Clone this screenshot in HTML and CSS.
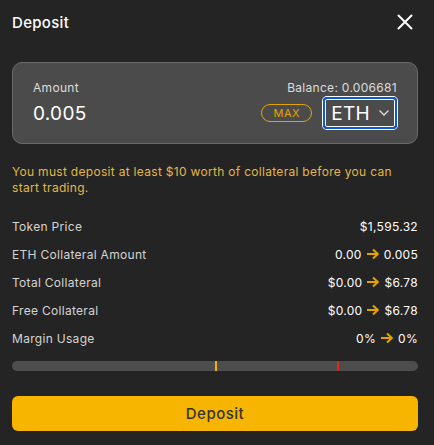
FILE: index.html
```html
<!DOCTYPE html>
<html lang="en">
<head>
    <meta charset="UTF-8">
    <meta name="viewport" content="width=device-width, initial-scale=1.0">
    <title>Deposit</title>

    <link rel="stylesheet" href="styles.css">
</head>
<body>
    <main class="modal">
        <header class="modal-header">
            <h2>Deposit</h2>
            <button class="close-btn" aria-label="Close">
                <svg width="16" height="16" viewBox="0 0 16 16">
                    <path d="M1.5 1.5 L14.5 14.5 M14.5 1.5 L1.5 14.5" stroke="#fff" stroke-width="2" stroke-linecap="round"/>
                </svg>
            </button>
        </header>

        <section class="amount-box">
            <div class="amount-top">
                <span class="label">Amount</span>
                <span class="balance">Balance: 0.006681</span>
            </div>
            <div class="amount-bottom">
                <input class="amount-input" type="text" value="0.005">
                <button class="max-btn">MAX</button>
                <div class="token-select">
                    <span>ETH</span>
                    <svg width="12" height="8" viewBox="0 0 12 8">
                        <path d="M1.5 1.5 L6 6 L10.5 1.5" fill="none" stroke="#ddd" stroke-width="1.3"/>
                    </svg>
                </div>
            </div>
        </section>

        <p class="warning">You must deposit at least $10 worth of collateral before you can start trading.</p>

        <ul class="stats">
            <li><span>Token Price</span><span class="value">$1,595.32</span></li>
            <li><span>ETH Collateral Amount</span><span class="value">0.00 <i class="arrow"></i> 0.005</span></li>
            <li><span>Total Collateral</span><span class="value">$0.00 <i class="arrow"></i> $6.78</span></li>
            <li><span>Free Collateral</span><span class="value">$0.00 <i class="arrow"></i> $6.78</span></li>
            <li><span>Margin Usage</span><span class="value">0% <i class="arrow"></i> 0%</span></li>
        </ul>

        <div class="margin-bar">
            <span class="mark mark-warn"></span>
            <span class="mark mark-danger"></span>
        </div>

        <button class="deposit-btn">Deposit</button>
    </main>
</body>
</html>
```

FILE: styles.css
```css
body {
    font-family: Inter, "Open Sans", sans-serif;
    letter-spacing: 0.3px;
    background-color: #242424;
    color: #fff;
    margin: 0;
    padding: 0;
}

.modal {
    padding: 0 16px 14px 12px;
}

.modal-header {
    display: flex;
    justify-content: space-between;
    align-items: center;
    height: 44px;
}

.modal-header h2 {
    margin: 0;
    font-size: 15px;
    font-weight: 500;
}

.close-btn {
    background: none;
    border: none;
    padding: 0;
    margin-right: 5px;
    display: flex;
    cursor: pointer;
}

.amount-box {
    margin-top: 18px;
    background-color: #4b4b4b;
    border: 1px solid #6a6a6a;
    border-radius: 10px;
    padding: 17px 20px 14px 20px;
}

.amount-top {
    display: flex;
    justify-content: space-between;
    font-size: 12px;
    color: #ddd;
}

.amount-bottom {
    display: flex;
    align-items: center;
    margin-top: 2px;
}

.amount-input {
    flex: 1;
    min-width: 0;
    background: none;
    border: none;
    outline: none;
    padding: 0;
    color: #fff;
    font-family: inherit;
    letter-spacing: 0.3px;
    font-size: 19px;
}

.max-btn {
    background: none;
    border: 1px solid #e5a300;
    border-radius: 9px;
    color: #e5a300;
    font-family: inherit;
    letter-spacing: 0.5px;
    font-size: 11px;
    height: 18px;
    width: 51px;
    padding: 0;
    margin-right: 11px;
}

.token-select {
    display: flex;
    align-items: center;
    gap: 8px;
    height: 28px;
    padding: 0 5px 0 6px;
    border: 2px solid #0a5ad6;
    box-shadow: inset 0 0 0 1px #fff, 0 0 0 1px #fff;
    border-radius: 4px;
    font-size: 19px;
}

.warning {
    color: #e0b84a;
    font-size: 12px;
    line-height: 16px;
    margin: 20px 0 16px 0;
}

.stats {
    list-style: none;
    margin: 0;
    padding: 0;
}

.stats li {
    display: flex;
    justify-content: space-between;
    align-items: center;
    height: 28px;
    font-size: 12px;
    color: #d4d4d4;
}

.stats .value {
    display: flex;
    align-items: center;
    gap: 4px;
    color: #fff;
}

.arrow {
    display: inline-block;
    width: 14px;
    height: 12px;
    background: url("data:image/svg+xml;utf8,<svg xmlns='http://www.w3.org/2000/svg' width='14' height='12' viewBox='0 0 14 12'><path d='M1 6 H12 M7 1.5 L11.8 6 L7 10.5' fill='none' stroke='%23e5a300' stroke-width='2'/></svg>") no-repeat center;
}

.margin-bar {
    position: relative;
    margin-top: 9px;
    height: 10px;
    border-radius: 5px;
    background-color: #4d4d4d;
}

.mark {
    position: absolute;
    top: 0;
    width: 2px;
    height: 10px;
}

.mark-warn {
    left: 203px;
    background-color: #f2b200;
}

.mark-danger {
    left: 325px;
    background-color: #e02a0e;
}

.deposit-btn {
    display: block;
    width: 100%;
    margin-top: 25px;
    height: 35px;
    border: none;
    border-radius: 6px;
    background-color: #f7b500;
    color: #333;
    font-family: inherit;
    letter-spacing: 0.5px;
    font-size: 15px;
    font-weight: 500;
    cursor: pointer;
}
```
